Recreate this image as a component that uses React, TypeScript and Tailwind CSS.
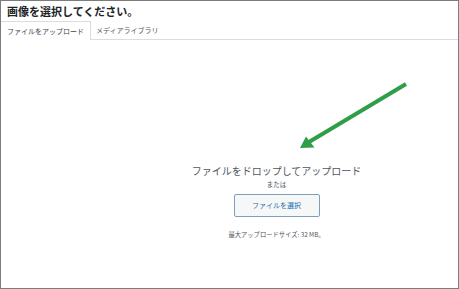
import React from 'react'

const jp = { fontFamily: '"Noto Sans CJK JP", "Noto Sans", sans-serif' }

function Arrow() {
  // green pointer drawn over the drop area
  return (
    <svg className="absolute left-0 top-0" width="459" height="289" viewBox="0 0 459 289">
      <line x1="405" y1="83" x2="308" y2="141" stroke="#2f9e48" strokeWidth="4" />
      <polygon points="299,147 305,135.5 313.5,146.5" fill="#2f9e48" />
    </svg>
  )
}

export default function App() {
  return (
    <div className="relative w-[459px] h-[289px] bg-white border border-[#7c7c7c] flex flex-col" style={jp}>
      <div className="h-[20px] px-[6px] flex items-center text-[11px] font-bold text-[#1d2327] leading-none">
        画像を選択してください。
      </div>
      <div className="h-[19px] flex items-stretch border-b border-[#dcdcde]">
        <div className="px-[6px] flex items-center bg-white border-r border-t border-[#dcdcde] text-[7px] text-[#3c434a] -mb-px">
          ファイルをアップロード
        </div>
        <div className="px-[5px] flex items-center text-[7px] text-[#50575e]">
          メディアライブラリ
        </div>
      </div>
      <div className="flex-1 flex flex-col items-center pl-[94px] pt-[124px]">
        <p className="text-[10px] leading-[14px] text-[#50575e]">ファイルをドロップしてアップロード</p>
        <p className="mt-[2px] text-[6.5px] leading-[9px] text-[#50575e]">または</p>
        <button className="mt-[5px] w-[86px] h-[23px] bg-[#f6f7f7] border border-[#7b9fbf] rounded-[2px] text-[7px] text-[#2271b1]">
          ファイルを選択
        </button>
        <p className="mt-[13px] text-[6.3px] leading-[9px] text-[#50575e]">最大アップロードサイズ: 32 MB。</p>
      </div>
      <Arrow />
    </div>
  )
}
